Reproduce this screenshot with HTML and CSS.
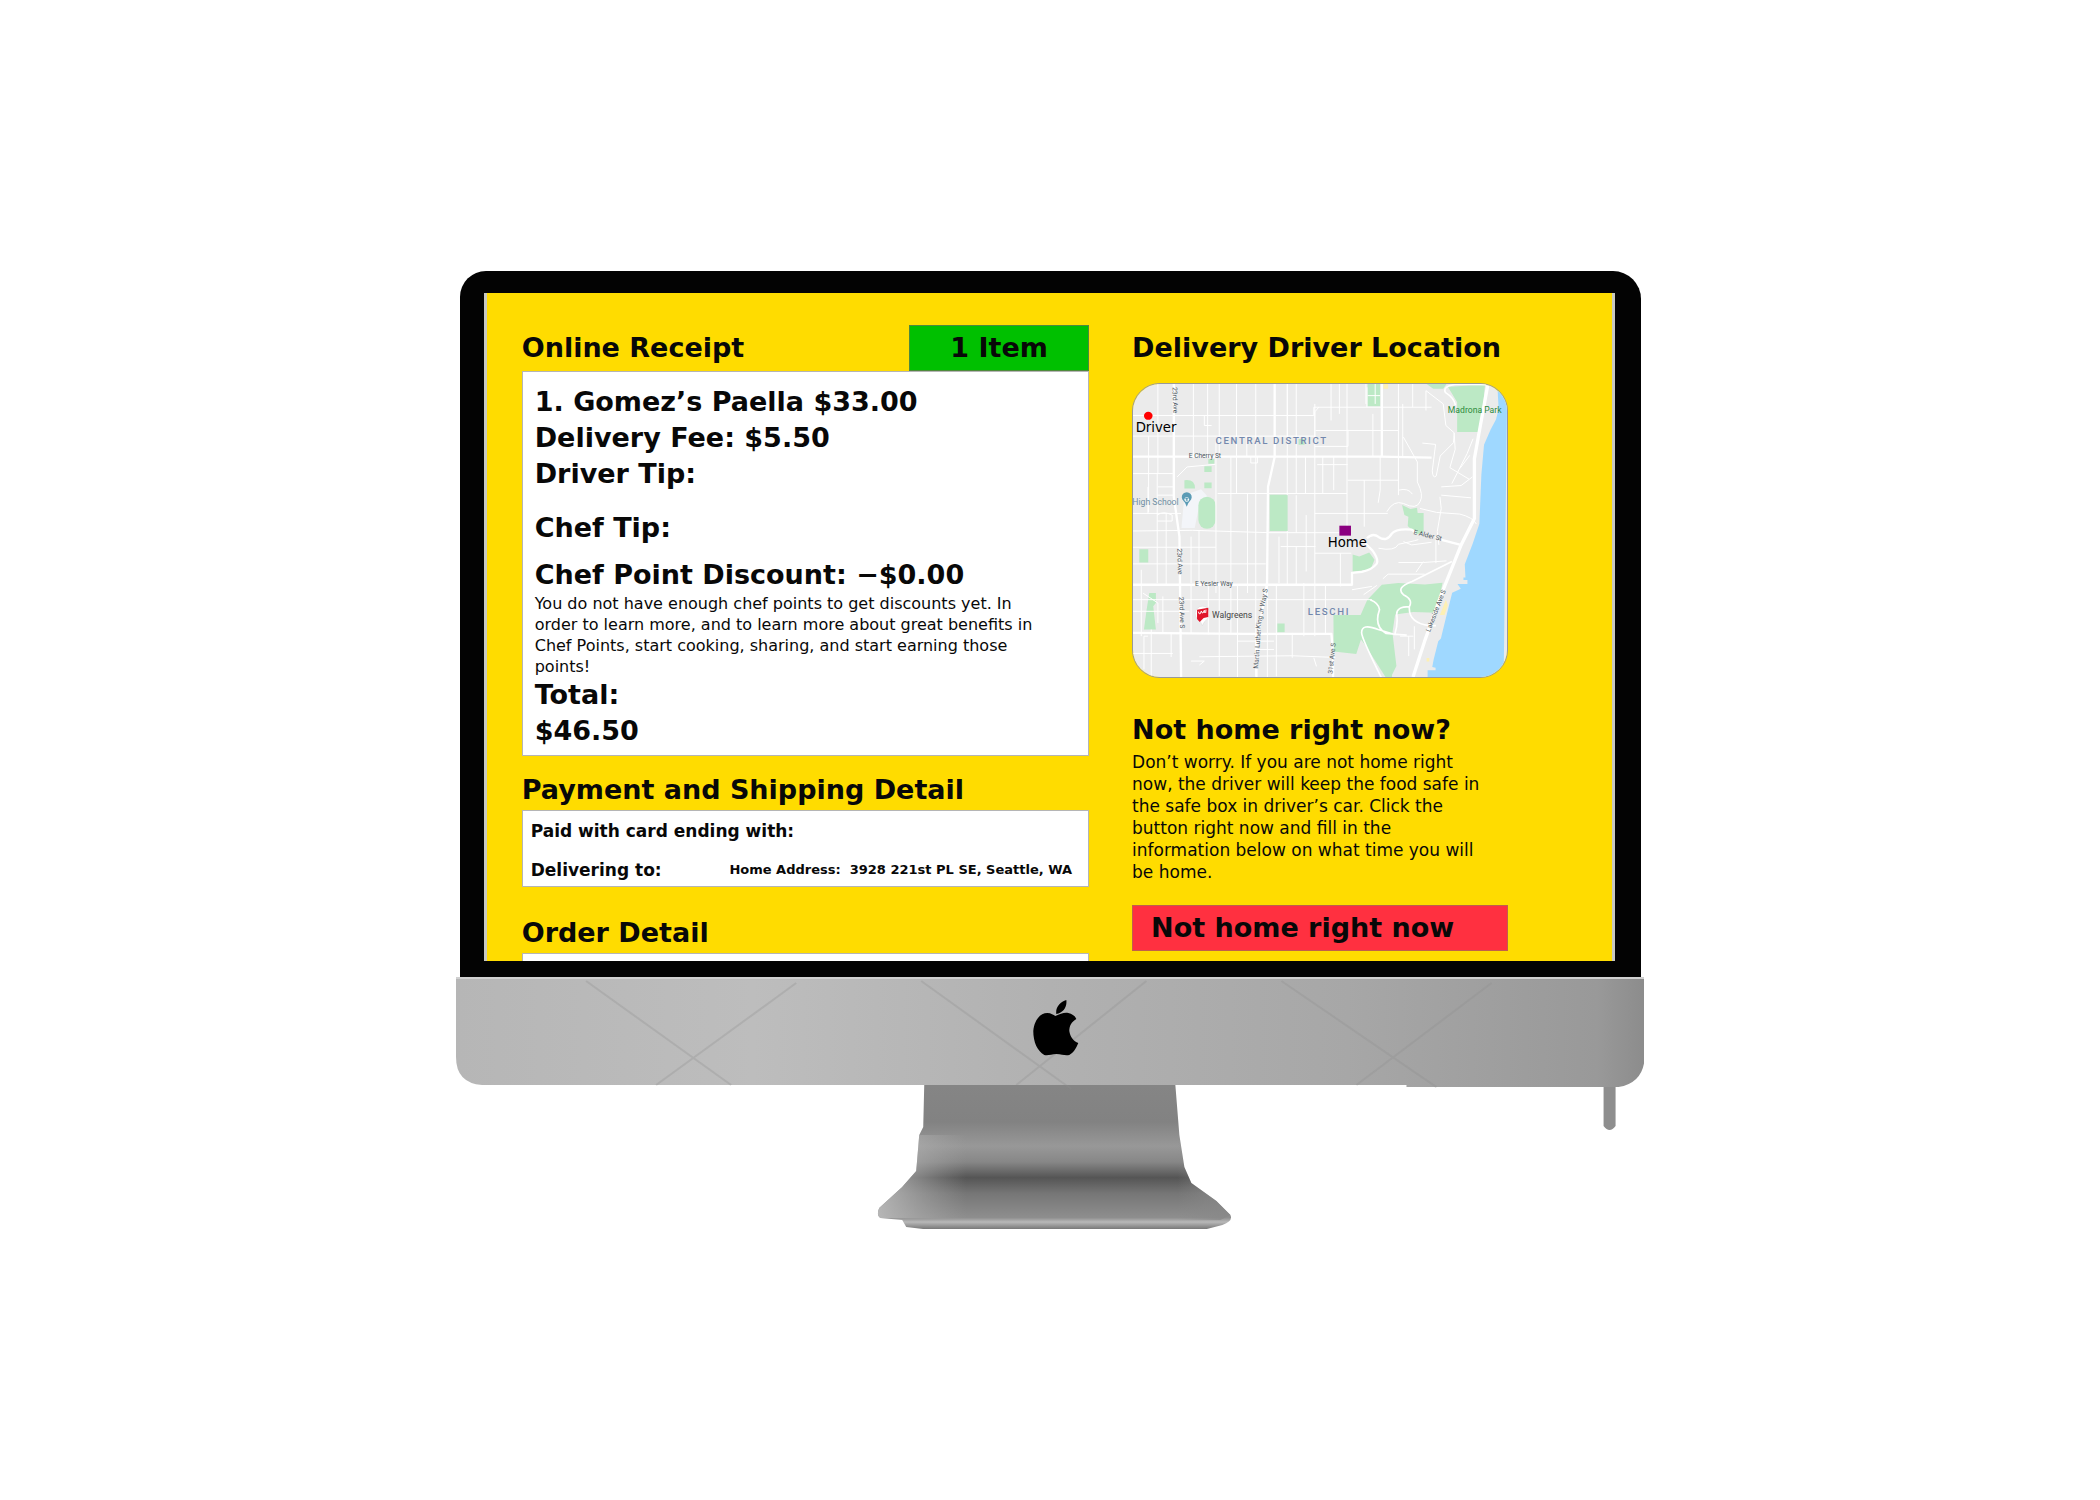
FILE: index.html
```html
<!DOCTYPE html>
<html lang="en">
<head>
<meta charset="utf-8">
<meta name="viewport" content="width=device-width, initial-scale=1">
<title>Online Receipt</title>
<link rel="stylesheet" href="styles.css">
</head>
<body>
<div class="device">
  <div class="bezel">
    <main class="screen">
      <div class="column">
        <section>
          <div class="head-row">
            <h1 class="title">Online Receipt</h1>
            <span class="count">1 Item</span>
          </div>
          <div class="card receipt">
            <p class="line">1. Gomez’s Paella $33.00</p>
            <p class="line">Delivery Fee: $5.50</p>
            <p class="line">Driver Tip:</p>
            <p class="line chef-tip">Chef Tip:</p>
            <p class="line discount">Chef Point Discount: −$0.00</p>
            <p class="note">You do not have enough chef points to get discounts yet. In order to learn more, and to learn more about great benefits in Chef Points, start cooking, sharing, and start earning those points!</p>
            <p class="line">Total:</p>
            <p class="line">$46.50</p>
          </div>
        </section>
        <section class="payment">
          <h2 class="title">Payment and Shipping Detail</h2>
          <div class="card details">
            <div class="detail">Paid with card ending with:</div>
            <div class="detail">
              <span>Delivering to:</span>
              <span class="address">Home Address:&nbsp; 3928 221st PL SE, Seattle, WA</span>
            </div>
          </div>
        </section>
        <section class="order">
          <h2 class="title">Order Detail</h2>
          <div class="card order-card"></div>
        </section>
      </div>

      <div class="column side">
        <div class="head-row"><h2 class="title">Delivery Driver Location</h2></div>
        <svg class="map" viewBox="35 40 1128 883" preserveAspectRatio="none" role="img" aria-label="Delivery map">
          <rect x="35" y="40" width="1128" height="883" fill="#ebebeb"/>
          <path fill="#f3f5f9" d="M190 375l50-18 20 22-24 20-15 75h-40z"/>
          <g fill="#bce9c5">
            <path d="M742 40h38v67h-38zM984 48l112-6-14 143h-70v-90zM920 40h60l-10 14h-30zM447 374h54v109H447zM54 538h27v40H54zM846 405l25 12 20-4 2 16h18v58l-20 6-28-25 2-28-12-5zM697 554l20 6 30-12 16 22-12 28-54 8zM785 645l50-5 80 4 53-5-18 90-70-2-55 8-8 55 12 100-15 30-92-110-14 44-68-8-1-110h82l20-45zM84 670h20v30l-8 10 8 70H68l8-60zM470 762h22v26h-22z"/>
            <path d="M790 790l12 0 14 133h-20l-70-110z"/>
            <rect x="232" y="380" width="52" height="96" rx="26"/>
            <path d="M190 330q32-4 32 25h-32zM250 288h22v17h-22zM250 337h22v17h-22zM262 266h18v14h-18zM534 206h18v17h-18z"/>
          </g>
          <path fill="#9fd8ff" d="M1163 40h-30l4 75-8 32-16 30-20 46-8 90-6 148-20 60-24 62 2 40-6 0v8h12v12h-30l10 14-26 12-22 88-12 50-8 8-14 56-4 22 10 2v8h-24v30l-4 35 6 30-8 25h234z"/>
          <path fill="#fdf0b4" d="M978 690l6 16-10 30h-14zM920 866h8v10h-8zM790 40h14v14h-14z"/>
          <g fill="none" stroke="#fff" stroke-width="3">
            <path d="M110 40v270M82 197v230M217 40v218M260 40v218M295 40v218M347 40v330M405 40v880M378 197v62M500 40v335M527 40v330M583 100v700M632 40v110M657 40v90M680 40v440M737 40v60M758 130v130M835 40v335M878 40v70M848 100v162M918 60v60M285 210v460M330 260v530M380 370v300M527 375v113M557 435v170M500 483v160M475 500v140M527 530v115M234 480v160M108 310v330M135 430v215M80 350v80M210 500v140M60 600v200M90 780v143M125 680v110M210 645v148M262 645v150M295 640v280M350 645v278M440 645v278M467 645v276M515 790v75M550 640v160M615 645v148M150 793v70M732 330v140M555 260v110M607 260v110M640 260v100M660 550v100M866 800v60M883 770v70M840 800h40"/>
            <path d="M35 135h545v-25h355M35 197h550M585 180h250M583 228h100v-50M35 310h120M290 370h390M682 330h154M590 283h92M583 430h220M35 430h145M35 483l180-2 230 7h212M35 532h250M480 530h105M583 550h110M35 582h400M35 690h720M35 725h170M35 852h120M350 815h110M405 840h55M235 862l280-3 130 5M210 875h40l-15 12M580 865l8 26M500 40v160M595 110l-12 14v76M250 135v30h22M390 260v18h20v-18M740 110v-60M765 40v60M742 75h38M835 262v68M168 320l30-30 85-8M110 350h48M108 375h50M108 435q18-14 45 0v18h-45M110 760v-60l-45-30M80 800h-12v100"/>
            <path d="M918 60l52 40 8 65 25 22-2 30-40 40-12 60q-10 10-12-15l10-80-40-4M1003 187l3 50-16 55 58 35M1060 205l-18 45-46 90M1050 255l-30 40M964 350l60-4 34-26M964 375l90 8M960 380l4 35-12 70 5 40M800 425q20-36 50-25 40 20 50-5 12-20-8-60v-60l-42-75M835 360q30-8 42 12M900 415l50 12 70 5q40 10 50 30M775 535q50 10 60-12 40-8 60-14M850 515l25 10 60-8M835 578h75l70-5M910 575l-22 32M948 500v80M788 627l16-14h110M695 660l60-10M730 675l40-28M780 260v100l-6 38"/>
          </g>
          <g fill="none" stroke="#fff" stroke-width="7" stroke-linejoin="round">
            <path d="M35 259h745l155 3M785 40v220M462 40v220l-20 90-3 290-10 60-22 120v103M158 40v340l17 120 5 423M35 645h660v-36l30-3q30-6 44-24 8-12-12-40l-22-22M35 790l340 3h258l5 60 0 70M740 505q18-18 35-4 25 16 40-10 12-16 60-12l12 8M965 510l55 14"/>
            <path stroke-width="10" d="M1104 45l-22 120-18 100v180l-40 80-60 150-50 140-35 108"/>
            <path stroke-width="5" d="M1100 42l-85-2q-50 6-38 26 25 15 30 38M996 575l-120 60q-50 18-26 40 30 14 18 36-40 0-38 24 4 30-6 60l-50-15q-50-20-50 10 0 16 60 136M750 690q26 10 28 30-18 50 20 72l62 5M868 710q-4 50 60 58h20"/>
          </g>
          <g class="street">
            <text x="203" y="264">E Cherry St</text>
            <text x="222" y="650">E Yesler Way</text>
            <text transform="translate(154 50) rotate(88)">23rd Ave</text>
            <text transform="translate(168 536) rotate(88)">23rd Ave</text>
            <text transform="translate(174 682) rotate(88)">23rd Ave S</text>
            <text transform="translate(412 898) rotate(-86)">Martin Luther</text>
            <text transform="translate(418 778) rotate(-79)">King Jr Way S</text>
            <text transform="translate(636 914) rotate(-84)">31st Ave S</text>
            <text transform="translate(930 788) rotate(-69)">Lakeside Ave S</text>
            <text transform="translate(880 492) rotate(14)">E Alder St</text>
          </g>
          <text class="district" x="284" y="221">CENTRAL DISTRICT</text>
          <text class="district" x="562" y="736">LESCHI</text>
          <text class="place park" x="984" y="128">Madrona Park</text>
          <text class="place school" x="33" y="404">High School</text>
          <text class="place shop" x="273" y="746">Walgreens</text>
          <path fill="#5b9bb5" d="M197 410q-3-12-9-17a15 15 0 1 1 18 0q-6 5-9 17z"/>
          <circle cx="197" cy="388" r="7" fill="#fff"/>
          <path fill="#5b9bb5" d="M191 386l6-3 6 3-6 3zM194 389h6v3h-6z"/>
          <path fill="#fff" stroke="#ccc" d="M244 768q-3-12-14-20a22 22 0 1 1 29 0q-11 8-15 20z"/>
          <path fill="#e0162b" d="M228 720l34-6v28l-14 3-12 12-8-9z"/>
          <path fill="none" stroke="#fff" stroke-width="3" d="M232 726q2 10 6 6l3-8q2 8 5 6l4-8 0 8M255 720l-1 10"/>
          <ellipse cx="81" cy="136" rx="13" ry="12" fill="#f00"/>
          <text class="marker" x="43" y="185">Driver</text>
          <rect x="657" y="467" width="35" height="30" fill="#8b0080"/>
          <text class="marker" x="622" y="530">Home</text>
        </svg>
        <h2 class="title away">Not home right now?</h2>
        <p class="message">Don’t worry. If you are not home right now, the driver will keep the food safe in the safe box in driver’s car. Click the button right now and fill in the information below on what time you will be home.</p>
        <button class="away-button" type="button">Not home right now</button>
      </div>
    </main>
  </div>
  <svg class="base" viewBox="0 0 1188 252" aria-hidden="true">
    <defs>
      <linearGradient id="metal" x1="0" x2="1">
        <stop offset="0" stop-color="#b6b6b6"/><stop offset=".25" stop-color="#bdbdbd"/>
        <stop offset=".5" stop-color="#b1b1b1"/><stop offset=".75" stop-color="#a7a7a7"/>
        <stop offset=".96" stop-color="#999"/><stop offset="1" stop-color="#8c8c8c"/>
      </linearGradient>
      <linearGradient id="neck" x1="0" x2="0" y1="109" y2="252" gradientUnits="userSpaceOnUse">
        <stop offset="0" stop-color="#858585"/><stop offset=".25" stop-color="#828282"/>
        <stop offset=".42" stop-color="#989898"/><stop offset=".53" stop-color="#878787"/>
        <stop offset=".64" stop-color="#555"/><stop offset=".75" stop-color="#767676"/>
        <stop offset=".92" stop-color="#8e8e8e"/><stop offset=".95" stop-color="#b8b8b8"/>
        <stop offset="1" stop-color="#777"/>
      </linearGradient>
      <linearGradient id="sheen" x1="0" x2="1">
        <stop offset="0" stop-color="#bbb" stop-opacity=".9"/><stop offset=".25" stop-color="#aaa" stop-opacity="0"/>
        <stop offset=".85" stop-color="#888" stop-opacity="0"/><stop offset="1" stop-color="#888" stop-opacity=".9"/>
      </linearGradient>
    </defs>
    <path fill="url(#neck)" d="M468 108H719L723 158 728 190 735 206 760 224 774 238Q777 244 766 248L750 252H468L450 250 446 243 424 241Q420 238 423 231L446 210 460 194 463 158 467 150z"/>
    <path fill="url(#sheen)" d="M460 194L463 158H723L728 190 735 206 760 224 774 238 764 243 424 241Q420 238 423 231L446 210z"/>
    <path fill="#8e8e8e" d="M1147 107h12v42q-6 8-12 0z"/>
    <path fill="url(#metal)" d="M0 0H1188V82Q1186 106 1162 110H950V108H26Q0 106 0 80z"/>
    <path fill="#d0d0d0" d="M0 0H1188V2H0z"/>
    <g stroke="#8d8d8d" stroke-opacity=".3" stroke-width="2" fill="none">
      <path d="M130 4l145 104M340 6L200 108M465 4l150 108M690 4L560 108M825 4l155 106M1035 6L900 108"/>
    </g>
    <path d="M599 39C604 37 608 35 612 36 616 37 619 39 620 42 615 45 613 49 613 54 614 60 617 64 622 66 620 71 617 76 613 78 608 79 606 77 600 77 595 77 592 79 588 78 581 74 577 65 577 54 578 43 584 36 591 36 595 36 597 38 599 39zM600 37C599 30 604 25 610 23 611 30 607 36 600 37z"/>
  </svg>
</div>
</body>
</html>
```
FILE: styles.css
```css
* {
  box-sizing: border-box;
}

body {
  margin: 0;
  min-height: 100vh;
  display: flex;
  align-items: center;
  justify-content: center;
  background: #fff;
  color: #080808;
  font-family: "DejaVu Sans", Verdana, sans-serif;
}

h1, h2, p {
  margin: 0;
}

.device {
  width: 56.6%;
  min-width: 1100px;
  display: flex;
  flex-direction: column;
}

.bezel {
  margin: 0 3px 0 4px;
  padding: 22px 26px 16px 24px;
  background: #030303;
  border-radius: 26px 28px 0 0;
}

.screen {
  display: grid;
  grid-template-columns: 567fr 376fr;
  column-gap: 43px;
  padding: 32px 104px 0 35px;
  aspect-ratio: 1131 / 668;
  overflow: hidden;
  background: #ffdc00;
  border-left: 3px solid #c9c9c0;
  border-right: 3px solid #c9c9c0;
}

.column {
  display: flex;
  flex-direction: column;
  min-width: 0;
  min-height: 0;
}

.head-row {
  display: flex;
  align-items: center;
  justify-content: space-between;
  height: 46px;
}

.title,
.line {
  font-size: 27px;
  line-height: 36px;
  font-weight: 700;
  white-space: nowrap;
}

.count {
  width: 180px;
  height: 46px;
  border: 1px solid #4e8a3c;
  background: #00c000;
  font-size: 27px;
  line-height: 44px;
  font-weight: 700;
  text-align: center;
}

.card {
  background: #fff;
  border: 1px solid #b5b5b5;
}

.receipt {
  padding: 12px 32px 6px 12px;
}

.chef-tip {
  margin-top: 18px;
}

.discount {
  margin-top: 11px;
}

.note {
  font-size: 16px;
  line-height: 21px;
}

.payment {
  margin-top: 16px;
}

.details {
  display: flex;
  flex-direction: column;
  gap: 11px;
  margin-top: 2px;
  padding: 6px 16px 2px 8px;
}

.detail {
  display: flex;
  align-items: center;
  justify-content: space-between;
  font-size: 17px;
  line-height: 28px;
  font-weight: 700;
  white-space: nowrap;
}

.address {
  font-size: 13px;
}

.order {
  margin-top: 28px;
}

.order-card {
  margin-top: 2px;
  height: 60px;
}

.map {
  display: block;
  width: 100%;
  height: 295px;
  flex: none;
  margin-top: 12px;
  border: 1px solid #999;
  border-radius: 28px;
}

.street {
  font-family: Roboto, sans-serif;
  font-size: 20px;
  fill: #4c5660;
}

.district {
  font-family: Roboto, sans-serif;
  font-size: 29px;
  font-weight: 500;
  letter-spacing: 5px;
  fill: #7388ad;
}

.place {
  font-family: Roboto, sans-serif;
  font-size: 26px;
}

.park {
  fill: #2c8a3c;
}

.school {
  fill: #6f8fa3;
}

.shop {
  fill: #444;
}

.marker {
  font-size: 40px;
  fill: #000;
}

.away {
  margin-top: 34px;
}

.message {
  margin-top: 3px;
  padding-right: 14px;
  font-size: 17px;
  line-height: 22px;
}

.away-button {
  height: 46px;
  margin-top: 22px;
  padding: 0 18px;
  border: 1px solid #c0604a;
  background: #ff3040;
  color: inherit;
  font-family: inherit;
  font-size: 27px;
  font-weight: 700;
  text-align: left;
}

.base {
  display: block;
  width: 100%;
}
```
